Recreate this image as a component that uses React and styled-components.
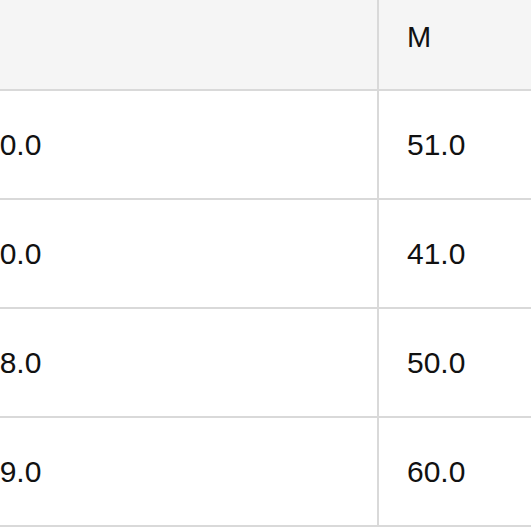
import React from 'react'
import styled, { createGlobalStyle } from 'styled-components'

const rows = [
  ['40.0', '51.0'],
  ['30.0', '41.0'],
  ['38.0', '50.0'],
  ['49.0', '60.0'],
]

const App = () => {
  return (
    <>
      <GlobalStyle />
      <Viewport>
        <Table>
          <thead>
            <tr>
              <HeadCell></HeadCell>
              <HeadCell>M</HeadCell>
            </tr>
          </thead>
          <tbody>
            {rows.map((r, i) => (
              <tr key={i}>
                <Cell>{r[0]}</Cell>
                <Cell>{r[1]}</Cell>
              </tr>
            ))}
          </tbody>
        </Table>
      </Viewport>
    </>
  )
}

const GlobalStyle = createGlobalStyle`
  html, body {
    margin: 0;
    padding: 0;
    background: #ffffff;
  }
`

const Viewport = styled.div`
  width: 531px;
  height: 531px;
  overflow: hidden;
  background: #ffffff;
`

const Table = styled.table`
  border-collapse: collapse;
  margin-left: -47px;
  margin-top: -17px;
  font-family: 'Liberation Sans', Arial, sans-serif;
  color: #111111;
  table-layout: fixed;
  width: 700px;

  td:first-child,
  th:first-child {
    width: 366px;
  }
`

const HeadCell = styled.th`
  height: 104px;
  padding: 0 28px;
  background: #f5f5f5;
  border: 2px solid #d9d9d9;
  font-size: 29px;
  font-weight: 400;
  text-align: left;
  vertical-align: middle;
`

const Cell = styled.td`
  height: 107px;
  padding: 0 28px;
  border: 2px solid #d9d9d9;
  font-size: 30px;
  text-align: left;
  vertical-align: middle;
`

export default App
